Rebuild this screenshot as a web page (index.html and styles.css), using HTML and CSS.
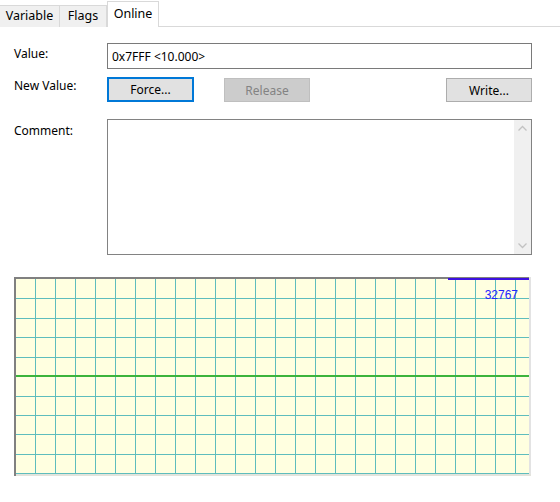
FILE: index.html
```html
<!DOCTYPE html>
<html lang="en">
<head>
    <meta charset="UTF-8">
    <title>Online</title>
    <link rel="stylesheet" href="styles.css">
</head>
<body>
    <div class="tabs">
        <div class="tab tab-variable">Variable</div>
        <div class="tab tab-flags">Flags</div>
        <div class="tab tab-online active">Online</div>
    </div>

    <div class="page">
        <div class="row row-value">
            <label class="label" for="value">Value:</label>
            <input class="field" id="value" type="text" value="0x7FFF &lt;10.000&gt;" readonly>
        </div>

        <div class="row row-buttons">
            <span class="label">New Value:</span>
            <div class="buttons">
                <button type="button" class="btn btn-focus">Force...</button>
                <button type="button" class="btn btn-disabled" disabled>Release</button>
                <button type="button" class="btn btn-write">Write...</button>
            </div>
        </div>

        <div class="row row-comment">
            <span class="label">Comment:</span>
            <div class="comment">
                <div class="comment-text"></div>
                <div class="scroll">
                    <svg width="17" height="17" viewBox="0 0 17 17"><path d="M4.5 10.5 L8.5 6.5 L12.5 10.5" fill="none" stroke="#c2c2c2" stroke-width="1.3"/></svg>
                    <svg width="17" height="17" viewBox="0 0 17 17"><path d="M4.5 6.5 L8.5 10.5 L12.5 6.5" fill="none" stroke="#c2c2c2" stroke-width="1.3"/></svg>
                </div>
            </div>
        </div>

        <div class="chart">
            <svg width="517" height="199" viewBox="0 0 517 199">
                <rect x="0" y="0" width="517" height="199" fill="#ffffe0"/>
                <g stroke="#5ebdbd" stroke-width="1" id="vlines"></g>
                <g stroke="#5ebdbd" stroke-width="1" id="hlines"></g>
                <rect x="0" y="98" width="517" height="2" fill="#3cb43c"/>
                <rect x="0" y="0" width="517" height="2" fill="#808080"/>
                <rect x="0" y="0" width="2" height="199" fill="#808080"/>
                <rect x="515" y="0" width="2" height="199" fill="#e3e3e3"/>
                <rect x="2" y="197" width="515" height="2" fill="#e3e3dc"/>
                <rect x="434" y="1" width="81" height="2" fill="#3c10e0"/>
                <text x="504" y="22" text-anchor="end" class="max-label">32767</text>
            </svg>
        </div>
    </div>

    <script>
        // grid lines for the trend chart
        const ns = 'http://www.w3.org/2000/svg';
        const vlines = document.getElementById('vlines');
        for (let x = 21; x <= 501; x += 20) {
            const l = document.createElementNS(ns, 'line');
            l.setAttribute('x1', x + 0.5); l.setAttribute('x2', x + 0.5);
            l.setAttribute('y1', 0); l.setAttribute('y2', 199);
            vlines.appendChild(l);
        }
        const hlines = document.getElementById('hlines');
        [21, 41, 60, 80, 119, 138, 157, 177, 196].forEach(y => {
            const l = document.createElementNS(ns, 'line');
            l.setAttribute('x1', 0); l.setAttribute('x2', 517);
            l.setAttribute('y1', y + 0.5); l.setAttribute('y2', y + 0.5);
            hlines.appendChild(l);
        });
    </script>
</body>
</html>
```

FILE: styles.css
```css
body {
    margin: 0;
    background: #ffffff;
    font-family: "Noto Sans", "Liberation Sans", sans-serif;
    font-size: 12px;
    color: #000;
}
.tabs {
    display: flex;
    align-items: flex-end;
    height: 27px;
    box-sizing: border-box;
    border-bottom: 1px solid #d9d9d9;
}
.tab {
    box-sizing: border-box;
    height: 22px;
    line-height: 20px;
    background: #f0f0f0;
    border: 1px solid #d9d9d9;
    border-bottom: none;
    text-align: center;
    margin-bottom: -1px;
    font-size: 12.5px;
}
.tab-variable {
    width: 60px;
    border-left: none;
}
.tab-flags {
    width: 47px;
    border-left: none;
}
.tab.active {
    width: 52px;
    height: 26px;
    line-height: 23px;
    background: #ffffff;
    border-right: 1px solid #d9d9d9;
}
.page {
    padding: 16px 0 0 14px;
}
.row {
    display: flex;
}
.label {
    width: 93px;
    flex: none;
}
.row-value .label {
    line-height: 22px;
}
.field {
    width: 425px;
    height: 26px;
    box-sizing: border-box;
    border: 1px solid #7a7a7a;
    padding: 0 4px;
    margin: 0;
    font-family: inherit;
    font-size: 12px;
    outline: none;
}
.row-buttons {
    margin-top: 8px;
}
.row-buttons .label {
    line-height: 18px;
}
.buttons {
    display: flex;
    width: 425px;
}
.btn {
    box-sizing: border-box;
    height: 24px;
    margin: 0;
    padding: 0;
    font-family: inherit;
    font-size: 12px;
    background: #e1e1e1;
    border: 1px solid #adadad;
    color: #000;
}
.btn-focus {
    width: 87px;
    border: 2px solid #0078d7;
    height: 25px;
}
.btn-disabled {
    width: 86px;
    margin-left: 30px;
    margin-top: 1px;
    background: #cccccc;
    border-color: #bfbfbf;
    color: #838383;
}
.btn-write {
    width: 86px;
    margin-left: auto;
    margin-top: 1px;
}
.row-comment {
    margin-top: 17px;
}
.row-comment .label {
    padding-top: 3px;
}
.comment {
    display: flex;
    width: 425px;
    height: 136px;
    box-sizing: border-box;
    border: 1px solid #828282;
}
.comment-text {
    flex: 1;
}
.scroll {
    width: 17px;
    background: #f0f0f0;
    display: flex;
    flex-direction: column;
    justify-content: space-between;
}
.scroll svg {
    display: block;
}
.chart {
    margin-top: 22px;
    width: 517px;
    height: 199px;
}
.chart svg {
    display: block;
}
.max-label {
    font-family: "Liberation Sans", sans-serif;
    font-size: 12px;
    fill: #2424ff;
}
```
